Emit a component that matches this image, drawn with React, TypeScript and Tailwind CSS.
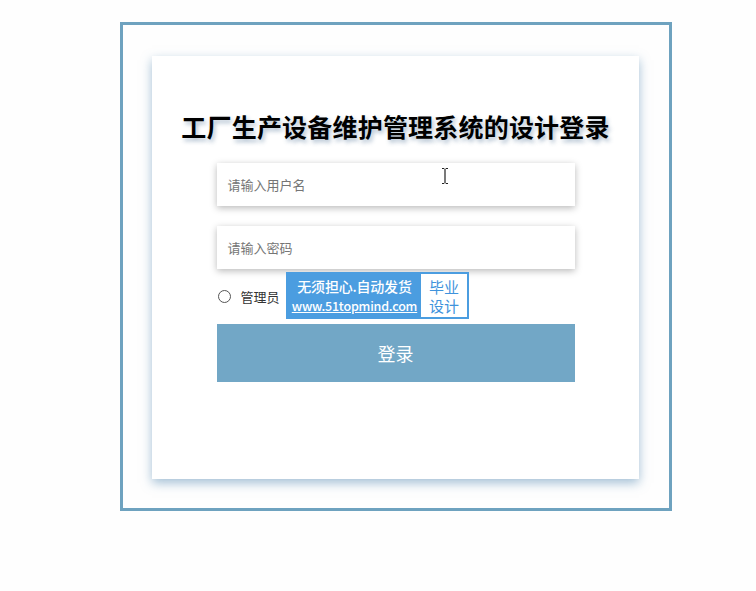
import React from "react";

export default function App() {
  return (
    <div
      className="w-[756px] h-[591px] bg-[#fefefe] pt-[22px] pl-[120px]"
      style={{ fontFamily: '"Noto Sans CJK SC", "Noto Sans", sans-serif' }}
    >
      <div className="w-[552px] h-[489px] border-[3px] border-[#6ea2bf] pt-[31px] pl-[29px]">
        <div className="relative w-[487px] h-[423px] bg-white shadow-[0_4px_10px_rgba(90,140,180,0.55)] flex flex-col items-center pt-[53px]">
          <h1 className="text-[25px] leading-[34px] font-bold text-black tracking-[0.2px] [text-shadow:2px_3px_4px_rgba(80,115,150,0.45)]">
            工厂生产设备维护管理系统的设计登录
          </h1>
          <div className="w-[358px] mt-[20px] flex flex-col">
            <div className="relative h-[43px] bg-white shadow-[0_2px_7px_rgba(0,0,0,0.28)] flex items-center pl-[11px]">
              <span className="text-[13px] text-[#757575]">请输入用户名</span>
              <svg className="absolute left-[223px] top-[4px]" width="10" height="18" viewBox="0 0 10 18">
                <path d="M2 1.5h2.3M5.7 1.5H8M5 2v14M2 16.5h2.3M5.7 16.5H8" stroke="#222" strokeWidth="1.2" fill="none" />
              </svg>
            </div>
            <div className="h-[43px] mt-[20px] bg-white shadow-[0_2px_7px_rgba(0,0,0,0.28)] flex items-center pl-[11px]">
              <span className="text-[13px] text-[#757575]">请输入密码</span>
            </div>
            <div className="h-[55px] flex items-center">
              <span className="w-[13px] h-[13px] rounded-full border border-[#555] bg-white ml-[1px]" />
              <span className="ml-[10px] text-[13px] text-[#333]">管理员</span>
            </div>
            <button className="h-[58px] bg-[#72a7c6] text-white text-[18px] flex items-center justify-center">
              登录
            </button>
          </div>
          <div className="absolute left-[134px] top-[216px] h-[47px] flex bg-[#4b9de0] p-[2px]">
            <div className="w-[133px] flex flex-col items-center justify-center leading-[20px]">
              <span className="text-[14px] text-white font-medium tracking-[-0.2px]">无须担心.自动发货</span>
              <span className="text-[12.5px] text-white underline font-medium tracking-[-0.2px]">www.51topmind.com</span>
            </div>
            <div className="w-[46px] bg-white flex flex-col items-center justify-center">
              <span className="text-[15px] leading-[19px] text-[#3f93dc]">毕业</span>
              <span className="text-[15px] leading-[19px] text-[#3f93dc]">设计</span>
            </div>
          </div>
        </div>
      </div>
    </div>
  );
}
